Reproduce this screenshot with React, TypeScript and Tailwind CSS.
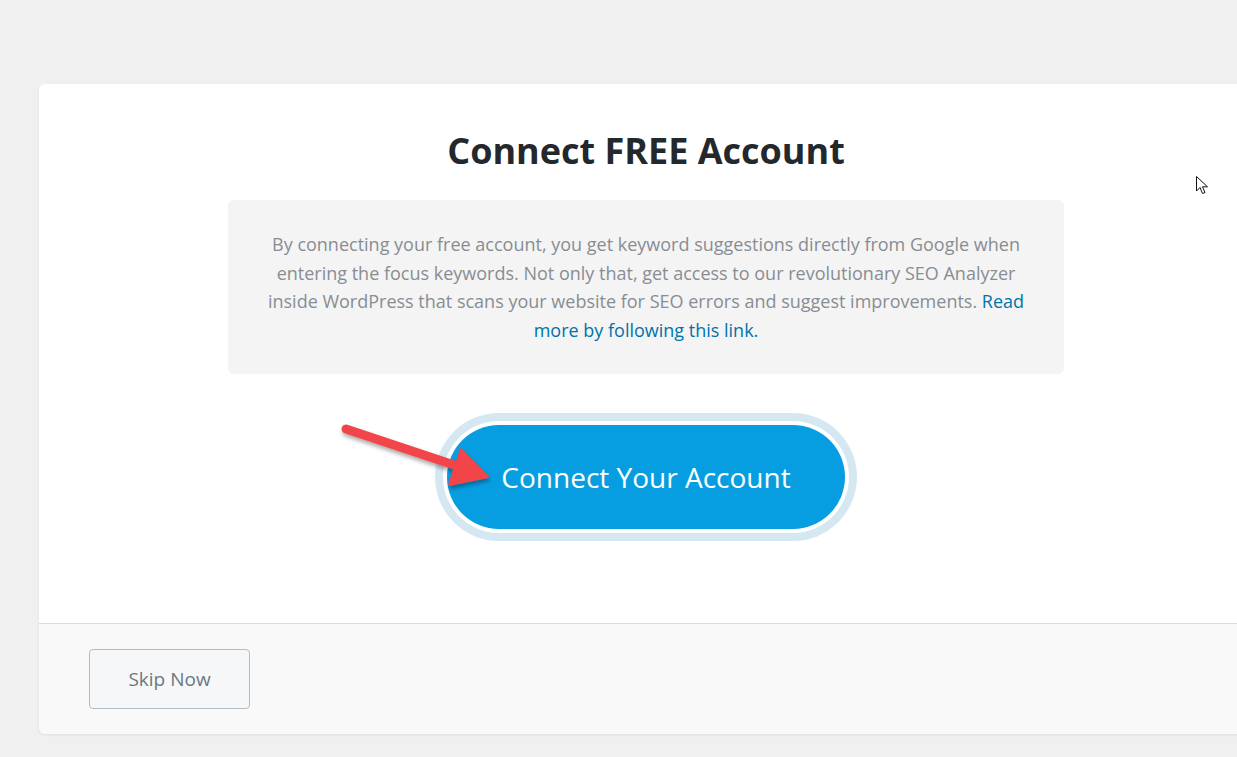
import React from 'react';

const font = { fontFamily: '"Open Sans", "Noto Sans", Arial, sans-serif' };

const PointerArrow = () => (
  <svg
    className="pointer-events-none absolute left-0 top-0"
    width="1237"
    height="757"
    viewBox="0 0 1237 757"
  >
    <defs>
      <filter id="arrowShadow" x="-20%" y="-20%" width="140%" height="160%">
        <feDropShadow dx="1" dy="3" stdDeviation="2" floodColor="#000" floodOpacity="0.35" />
      </filter>
    </defs>
    <g filter="url(#arrowShadow)" fill="#f2444a" stroke="#f2444a">
      <line x1="346" y1="429" x2="460" y2="467" strokeWidth="9" strokeLinecap="round" />
      <polygon points="461,449 488,477 449,485" strokeWidth="2" strokeLinejoin="round" />
    </g>
  </svg>
);

const MouseCursor = () => (
  <svg className="absolute left-[1196px] top-[176px]" width="14" height="20" viewBox="0 0 14 20">
    <path
      d="M0.5 0.5 L0.5 15 L4 11.5 L6.5 17.5 L9 16.5 L6.5 10.8 L11.5 10.8 Z"
      fill="#fff"
      stroke="#111"
      strokeWidth="1"
      strokeLinejoin="round"
    />
  </svg>
);

export default function App() {
  return (
    <div className="relative h-[757px] w-[1237px] overflow-hidden bg-[#f0f0f1]" style={font}>
      <div className="ml-[39px] mt-[84px] w-[1214px] overflow-hidden rounded-md bg-white shadow-[0_1px_3px_rgba(0,0,0,0.08)]">
        <div className="flex flex-col items-center pb-[94px] pt-[45px]">
          <h1 className="text-[36px] font-bold leading-[43px] text-[#23282d]">
            Connect FREE Account
          </h1>

          <div className="mt-[28px] flex h-[174px] w-[836px] items-center justify-center rounded-md bg-[#f4f4f4]">
            <p className="w-[768px] text-center text-[18px] leading-[28.5px] text-[#888d93]">
              By connecting your free account, you get keyword suggestions directly from Google
              when entering the focus keywords. Not only that, get access to our revolutionary SEO
              Analyzer inside WordPress that scans your website for SEO errors and suggest
              improvements.{' '}
              <a href="#" className="text-[#0073aa]">
                Read more by following this link.
              </a>
            </p>
          </div>

          <button
            type="button"
            className="mt-[51px] flex h-[104px] w-[398px] items-center justify-center rounded-full bg-[#079ee1] text-[28px] text-white shadow-[0_0_0_4px_#ffffff,0_0_0_12px_#d5e7f1]"
          >
            Connect Your Account
          </button>
        </div>

        <div className="border-t border-[#dcdcde] bg-[#f9f9f9] px-[50px] pb-[25px] pt-[25px]">
          <button
            type="button"
            className="flex h-[60px] w-[161px] items-center justify-center rounded-[4px] border border-[#b5bcc4] bg-[#f6f7f8] text-[19px] text-[#6c7781]"
          >
            Skip Now
          </button>
        </div>
      </div>

      <PointerArrow />
      <MouseCursor />
    </div>
  );
}
